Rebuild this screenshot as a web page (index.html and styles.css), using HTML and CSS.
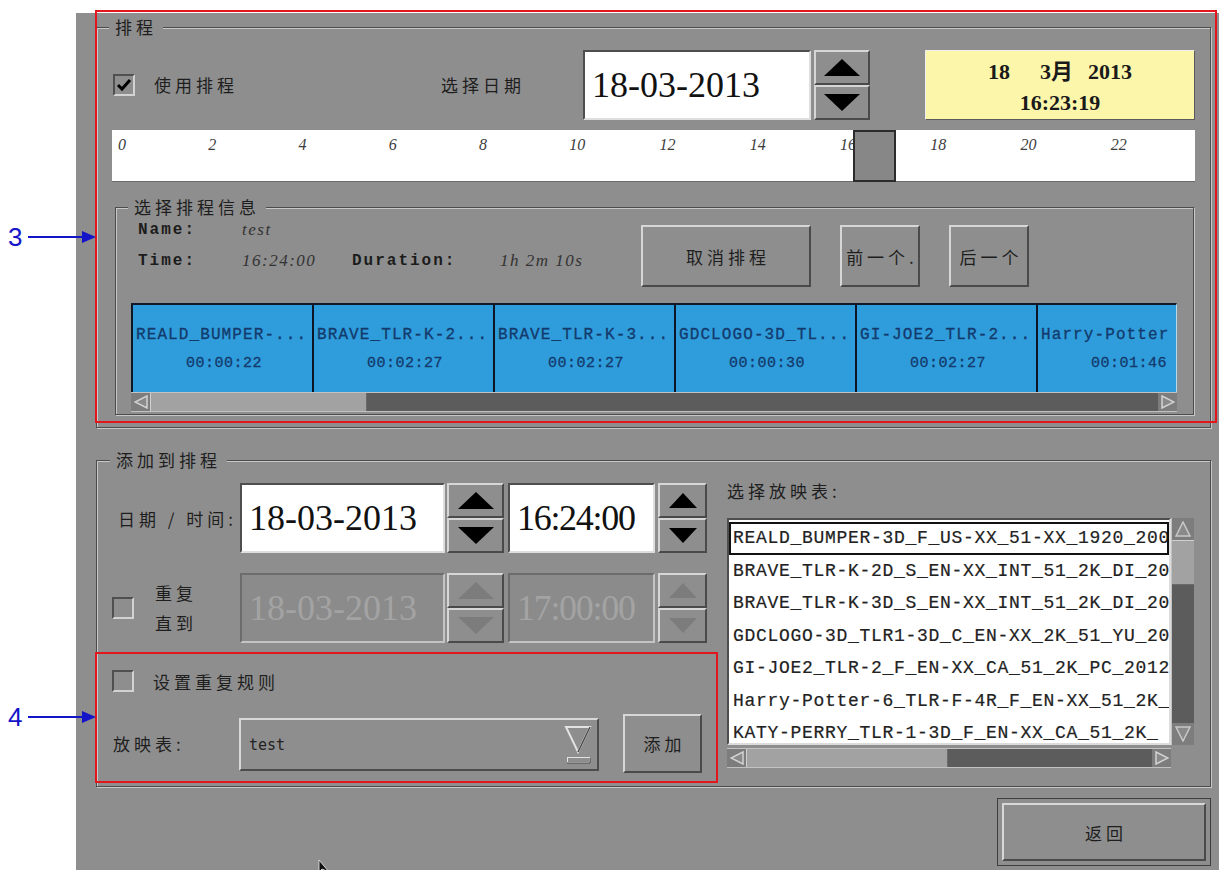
FILE: index.html
```html
<!DOCTYPE html>
<html>

<head>
    <meta charset="utf-8">
    <link rel="stylesheet" href="styles.css">
    <title>排程</title>
</head>

<body>
    <div class="page">
        <div class="screen">
            <!-- schedule overview -->
            <fieldset class="group group-main">
                <legend>排程</legend>
                <div class="top-row">
                    <span class="check"><svg width="16" height="14" viewBox="0 0 16 14"><path d="M2 7 L6 11 L14 2" fill="none" stroke="#000" stroke-width="3"/></svg></span>
                    <span class="label use-label">使用排程</span>
                    <span class="label date-label">选择日期</span>
                    <div class="field top-date">18-03-2013</div>
                    <div class="spin top-spin">
                        <div class="spin-btn"><svg width="36" height="17" viewBox="0 0 36 17"><polygon points="0,17 18,0 36,17" fill="#000"/></svg></div>
                        <div class="spin-btn"><svg width="36" height="17" viewBox="0 0 36 17"><polygon points="0,0 36,0 18,17" fill="#000"/></svg></div>
                    </div>
                    <div class="clock">
                        <div><span>18</span><span class="gap-1">3月</span><span class="gap-2">2013</span></div>
                        <div>16:23:19</div>
                    </div>
                </div>
                <div class="timeline">
                    <span class="hour">0</span><span class="hour">2</span><span class="hour">4</span>
                    <span class="hour">6</span><span class="hour">8</span><span class="hour">10</span>
                    <span class="hour">12</span><span class="hour">14</span><span class="hour">16</span>
                    <span class="hour">18</span><span class="hour">20</span><span class="hour">22</span>
                    <div class="slider"></div>
                </div>

                <fieldset class="group group-info">
                    <legend>选择排程信息</legend>
                    <div class="info-head">
                        <div class="info">
                            <div class="info-row"><span class="key">Name:</span><span class="val">test</span></div>
                            <div class="info-row"><span class="key">Time:</span><span class="val">16:24:00</span><span class="key">Duration:</span><span class="val">1h 2m 10s</span></div>
                        </div>
                        <button class="btn btn-cancel">取消排程</button>
                        <button class="btn btn-small btn-prev">前一个.</button>
                        <button class="btn btn-small btn-next">后一个</button>
                    </div>
                    <div class="strip">
                        <div class="tiles">
                            <div class="tile"><div class="tile-name">REALD_BUMPER-...</div><div class="tile-time">00:00:22</div></div>
                            <div class="tile"><div class="tile-name">BRAVE_TLR-K-2...</div><div class="tile-time">00:02:27</div></div>
                            <div class="tile"><div class="tile-name">BRAVE_TLR-K-3...</div><div class="tile-time">00:02:27</div></div>
                            <div class="tile"><div class="tile-name">GDCLOGO-3D_TL...</div><div class="tile-time">00:00:30</div></div>
                            <div class="tile"><div class="tile-name">GI-JOE2_TLR-2...</div><div class="tile-time">00:02:27</div></div>
                            <div class="tile"><div class="tile-name">Harry-Potter</div><div class="tile-time">00:01:46</div></div>
                        </div>
                        <div class="hscroll">
                            <div class="sb-arrow"><svg width="14" height="14" viewBox="0 0 14 14"><polygon points="13,1 1,7 13,13" fill="#8a8a8a" stroke="#d2d2d2" stroke-width="1.5"/></svg></div>
                            <div class="sb-thumb strip-thumb"></div>
                            <div class="sb-track"></div>
                            <div class="sb-arrow"><svg width="14" height="14" viewBox="0 0 14 14"><polygon points="1,1 13,7 1,13" fill="#8a8a8a" stroke="#d2d2d2" stroke-width="1.5"/></svg></div>
                        </div>
                    </div>
                </fieldset>
            </fieldset>

            <!-- add to schedule -->
            <fieldset class="group group-add">
                <legend>添加到排程</legend>
                <div class="add-body">
                    <div class="add-left">
                        <div class="row row-when">
                            <span class="label when-label">日期 / 时间:</span>
                            <div class="field date-field">18-03-2013</div>
                            <div class="spin date-spin">
                                <div class="spin-btn"><svg width="36" height="17" viewBox="0 0 36 17"><polygon points="0,17 18,0 36,17" fill="#000"/></svg></div>
                                <div class="spin-btn"><svg width="36" height="17" viewBox="0 0 36 17"><polygon points="0,0 36,0 18,17" fill="#000"/></svg></div>
                            </div>
                            <div class="field time-field">16:24:00</div>
                            <div class="spin time-spin">
                                <div class="spin-btn"><svg width="28" height="15" viewBox="0 0 28 15"><polygon points="0,15 14,0 28,15" fill="#000"/></svg></div>
                                <div class="spin-btn"><svg width="28" height="15" viewBox="0 0 28 15"><polygon points="0,0 28,0 14,15" fill="#000"/></svg></div>
                            </div>
                        </div>
                        <div class="row row-repeat">
                            <span class="check"></span>
                            <span class="label repeat-label">重复<br>直到</span>
                            <div class="field date-field disabled">18-03-2013</div>
                            <div class="spin date-spin disabled">
                                <div class="spin-btn"><svg width="36" height="17" viewBox="0 0 36 17"><polygon points="0,17 18,0 36,17" fill="#7c7c7c"/></svg></div>
                                <div class="spin-btn"><svg width="36" height="17" viewBox="0 0 36 17"><polygon points="0,0 36,0 18,17" fill="#7c7c7c"/></svg></div>
                            </div>
                            <div class="field time-field disabled">17:00:00</div>
                            <div class="spin time-spin disabled">
                                <div class="spin-btn"><svg width="28" height="15" viewBox="0 0 28 15"><polygon points="0,15 14,0 28,15" fill="#7c7c7c"/></svg></div>
                                <div class="spin-btn"><svg width="28" height="15" viewBox="0 0 28 15"><polygon points="0,0 28,0 14,15" fill="#7c7c7c"/></svg></div>
                            </div>
                        </div>
                        <div class="row row-rule">
                            <span class="check"></span>
                            <span class="label rule-label">设置重复规则</span>
                        </div>
                        <div class="row row-playlist">
                            <span class="label playlist-label">放映表:</span>
                            <div class="combo">
                                <span>test</span>
                                <svg class="combo-arrow" width="28" height="40" viewBox="0 0 28 40">
                                    <polygon points="2,2 26,2 14,27" fill="none" stroke="#e2e2e2" stroke-width="2"/>
                                    <path d="M26 2 L14 27" stroke="#4a4a4a" stroke-width="1.5"/>
                                    <rect x="3.5" y="32.5" width="22" height="5" fill="#8e8e8e" stroke="#e2e2e2"/>
                                    <path d="M3 38 H26 V33" fill="none" stroke="#4a4a4a"/>
                                </svg>
                            </div>
                            <button class="btn btn-add">添加</button>
                        </div>
                    </div>

                    <div class="add-right">
                        <div class="label list-title">选择放映表:</div>
                        <div class="listbox">
                            <div class="list">
                                <div class="item current">REALD_BUMPER-3D_F_US-XX_51-XX_1920_200</div>
                                <div class="item">BRAVE_TLR-K-2D_S_EN-XX_INT_51_2K_DI_20</div>
                                <div class="item">BRAVE_TLR-K-3D_S_EN-XX_INT_51_2K_DI_20</div>
                                <div class="item">GDCLOGO-3D_TLR1-3D_C_EN-XX_2K_51_YU_20</div>
                                <div class="item">GI-JOE2_TLR-2_F_EN-XX_CA_51_2K_PC_2012</div>
                                <div class="item">Harry-Potter-6_TLR-F-4R_F_EN-XX_51_2K_</div>
                                <div class="item">KATY-PERRY_TLR-1-3D_F_EN-XX_CA_51_2K_</div>
                            </div>
                            <div class="vscroll">
                                <div class="vsb-arrow"><svg width="16" height="16" viewBox="0 0 16 16"><polygon points="1,15 8,1 15,15" fill="#8a8a8a" stroke="#c8c8c8" stroke-width="1.5"/></svg></div>
                                <div class="vsb-thumb"></div>
                                <div class="sb-track"></div>
                                <div class="vsb-arrow"><svg width="16" height="16" viewBox="0 0 16 16"><polygon points="1,1 15,1 8,15" fill="#8a8a8a" stroke="#c8c8c8" stroke-width="1.5"/></svg></div>
                            </div>
                        </div>
                        <div class="hscroll list-hscroll">
                            <div class="sb-arrow"><svg width="14" height="14" viewBox="0 0 14 14"><polygon points="13,1 1,7 13,13" fill="#8a8a8a" stroke="#d2d2d2" stroke-width="1.5"/></svg></div>
                            <div class="sb-thumb list-thumb"></div>
                            <div class="sb-track"></div>
                            <div class="sb-arrow"><svg width="14" height="14" viewBox="0 0 14 14"><polygon points="1,1 13,7 1,13" fill="#8a8a8a" stroke="#d2d2d2" stroke-width="1.5"/></svg></div>
                        </div>
                    </div>
                </div>
            </fieldset>

            <div class="footer">
                <button class="back"><span class="back-face">返回</span></button>
            </div>
        </div>

        <!-- annotations drawn over the screenshot -->
        <div class="mark mark-3"></div>
        <div class="mark mark-4"></div>
        <div class="note note-3"><span>3</span><svg width="68" height="14" viewBox="0 0 68 14"><path d="M0 7 H56" stroke="#1414c8" stroke-width="2"/><polygon points="54,1 68,7 54,13" fill="#1414c8"/></svg></div>
        <div class="note note-4"><span>4</span><svg width="68" height="14" viewBox="0 0 68 14"><path d="M0 7 H56" stroke="#1414c8" stroke-width="2"/><polygon points="54,1 68,7 54,13" fill="#1414c8"/></svg></div>
        <svg class="cursor" width="14" height="12" viewBox="0 0 14 12"><polygon points="1,0 1,12 4,9 11,12" fill="#111" stroke="#eee" stroke-width="0.8"/></svg>
    </div>
</body>

</html>
```

FILE: styles.css
```css
body {
    margin: 0;
    background-color: white;
    font-family: "Noto Sans CJK SC", sans-serif;
    color: #1e1e1e;
}

.page {
    position: relative;
    width: 1219px;
    height: 870px;
    padding-top: 13px;
    box-sizing: border-box;
    overflow: hidden;
}

.screen {
    margin-left: 76px;
    height: 857px;
    padding: 3px 8px 0 20px;
    box-sizing: border-box;
    background-color: #8e8e8e;
}

/* group boxes */
.group {
    margin: 0;
    padding: 0 15px;
    min-width: 0;
    border: 1px solid #4c4c4c;
    box-shadow: inset 1px 1px 0 #c8c8c8, 1px 1px 0 #c8c8c8;
}

.group legend {
    margin-left: -3px;
    padding: 0 6px;
    font-size: 17px;
    line-height: 22px;
    letter-spacing: 4px;
    background-color: #8e8e8e;
}

.label {
    font-size: 17px;
    letter-spacing: 4px;
    white-space: nowrap;
    flex: none;
}

.check {
    width: 22px;
    height: 22px;
    box-sizing: border-box;
    border: 2px solid;
    border-color: #505050 #d2d2d2 #d2d2d2 #505050;
    display: flex;
    align-items: center;
    justify-content: center;
    flex: none;
}

.field {
    box-sizing: border-box;
    height: 70px;
    background-color: white;
    border: 2px solid;
    border-color: #4e4e4e #dedede #dedede #4e4e4e;
    display: flex;
    align-items: center;
    padding-left: 7px;
    font-family: "Liberation Serif", serif;
    font-size: 36px;
    color: #111;
    flex: none;
}

.field.disabled {
    background-color: #8b8b8b;
    color: #a3a3a3;
    border-color: #6c6c6c #c4c4c4 #c4c4c4 #6c6c6c;
}

.spin {
    display: flex;
    flex-direction: column;
    height: 70px;
    flex: none;
}

.spin-btn {
    flex: 1;
    display: flex;
    align-items: center;
    justify-content: center;
    border: 2px solid;
    border-color: #d6d6d6 #4a4a4a #4a4a4a #d6d6d6;
}

.btn {
    box-sizing: border-box;
    padding: 0 0 0 4px;
    border: 2px solid;
    border-color: #d6d6d6 #4a4a4a #4a4a4a #d6d6d6;
    background-color: #8e8e8e;
    font-family: "Noto Sans CJK SC", sans-serif;
    font-size: 17px;
    letter-spacing: 4px;
    color: #1e1e1e;
    flex: none;
}

/* top row */
.top-row {
    margin-top: 11px;
    height: 71px;
    display: flex;
    align-items: center;
}

.top-row .check {
    margin-left: 1px;
}

.use-label {
    margin-left: 19px;
    width: 287px;
}

.date-label {
    width: 142px;
}

.top-date {
    width: 228px;
}

.top-spin {
    margin-left: 3px;
    width: 56px;
}

.clock {
    margin-left: auto;
    width: 270px;
    height: 70px;
    box-sizing: border-box;
    padding-top: 5px;
    background-color: #fcf6ab;
    border: 1px solid;
    border-color: #eeeeee #5a5a5a #5a5a5a #eeeeee;
    font-family: "Liberation Serif", "Noto Sans CJK SC", serif;
    font-weight: bold;
    font-size: 22px;
    line-height: 31px;
    text-align: center;
    color: #1a1a1a;
}

.gap-1 {
    margin-left: 30px;
}

.gap-2 {
    margin-left: 15px;
}

/* timeline */
.timeline {
    position: relative;
    margin-top: 10px;
    height: 52px;
    box-sizing: border-box;
    background-color: white;
    border-bottom: 1px solid #6a6a6a;
    display: grid;
    grid-template-columns: repeat(12, 1fr);
}

.hour {
    padding: 5px 0 0 6px;
    font-family: "Liberation Serif", serif;
    font-style: italic;
    font-size: 16px;
    line-height: 20px;
    color: #3c3c3c;
}

.slider {
    position: absolute;
    left: 741px;
    top: 0;
    width: 43px;
    height: 52px;
    box-sizing: border-box;
    background-color: #878787;
    border: 2px solid #2c2c2c;
}

/* schedule info */
.group-info {
    margin: 14px 1px 12px 3px;
    padding: 0 16px 2px 12px;
}

.group-info legend {
    margin-left: 0;
}

.info-head {
    display: flex;
}

.info {
    margin-left: 10px;
    width: 503px;
    flex: none;
}

.info-row {
    height: 24px;
    display: grid;
    grid-template-columns: 104px 110px 148px auto;
    align-items: center;
}

.info-row + .info-row {
    margin-top: 7px;
}

.key {
    font-family: "Liberation Mono", monospace;
    font-weight: bold;
    font-size: 16px;
    letter-spacing: 2px;
    color: #1c1c1c;
}

.val {
    font-family: "Liberation Serif", serif;
    font-style: italic;
    font-size: 17px;
    letter-spacing: 1.5px;
    color: #333;
}

.info-head .btn {
    margin-top: 7px;
    height: 62px;
}

.btn-cancel {
    width: 170px;
}

.btn-small {
    width: 80px;
}

.btn-prev {
    margin-left: 29px;
}

.btn-next {
    margin-left: 29px;
}

.strip {
    margin: 16px 0 0 3px;
}

.tiles {
    height: 89px;
    box-sizing: border-box;
    display: flex;
    overflow: hidden;
    border-top: 2px solid #111a2a;
    border-right: 1px solid #b8d8ee;
}

.tile {
    flex: 0 0 181px;
    box-sizing: border-box;
    padding: 20px 0 0 3px;
    background-color: #2f9ddc;
    border-left: 2px solid #0e1626;
    color: #133a6c;
    white-space: nowrap;
}

.tile-name {
    font-family: "Liberation Mono", monospace;
    font-size: 16px;
    letter-spacing: 1.1px;
    line-height: 20px;
    -webkit-text-stroke: 0.3px #133a6c;
}

.tile-time {
    margin-top: 9px;
    font-family: "Liberation Mono", monospace;
    font-size: 15px;
    letter-spacing: 0.5px;
    line-height: 20px;
    text-align: center;
    -webkit-text-stroke: 0.3px #133a6c;
}

/* scrollbars */
.hscroll {
    height: 20px;
    display: flex;
    background-color: #5c5c5c;
    border-top: 1px solid #c2c2c2;
    border-bottom: 1px solid #c2c2c2;
    box-sizing: border-box;
}

.sb-arrow {
    width: 19px;
    display: flex;
    align-items: center;
    justify-content: center;
    background-color: #7d7d7d;
    flex: none;
}

.sb-thumb {
    background-color: #a2a2a2;
    border-left: 1px solid #d0d0d0;
    border-right: 1px solid #6a6a6a;
    flex: none;
}

.strip-thumb {
    width: 215px;
}

.list-thumb {
    width: 200px;
}

.sb-track {
    flex: 1;
}

/* add to schedule */
.group-add {
    margin-top: 21px;
    padding-bottom: 13px;
}

.group-add legend {
    margin-left: -2px;
}

.add-body {
    display: flex;
}

.add-left {
    width: 595px;
    flex: none;
}

.row {
    display: flex;
    align-items: center;
}

.row-when {
    margin-top: 12px;
    height: 70px;
}

.when-label {
    margin-left: 6px;
    width: 122px;
}

.date-field {
    width: 205px;
}

.date-spin {
    margin-left: 2px;
    width: 57px;
}

.time-field {
    margin-left: 4px;
    width: 147px;
    letter-spacing: -1.3px;
}

.time-spin {
    margin-left: 3px;
    width: 49px;
}

.row-repeat {
    margin-top: 20px;
    height: 70px;
}

.repeat-label {
    margin-left: 21px;
    width: 85px;
    line-height: 30px;
}

.row-rule {
    margin-top: 27px;
    height: 22px;
}

.rule-label {
    margin-left: 19px;
}

.row-playlist {
    margin-top: 22px;
    height: 59px;
}

.playlist-label {
    margin-left: 1px;
    width: 126px;
}

.combo {
    width: 360px;
    height: 53px;
    margin-top: 2px;
    box-sizing: border-box;
    padding-left: 8px;
    border: 2px solid;
    border-color: #d8d8d8 #4c4c4c #4c4c4c #d8d8d8;
    display: flex;
    align-items: center;
    font-family: "DejaVu Sans Mono", monospace;
    font-size: 15px;
    color: #222;
    flex: none;
}

.combo-arrow {
    margin-left: auto;
    margin-right: 5px;
}

.btn-add {
    margin-left: 24px;
    width: 79px;
    height: 59px;
}

.add-right {
    margin-left: 20px;
    flex: 1;
}

.list-title {
    margin-top: 9px;
    line-height: 22px;
}

.listbox {
    margin-top: 16px;
    height: 227px;
    display: flex;
}

.list {
    width: 444px;
    box-sizing: border-box;
    padding-top: 2px;
    background-color: white;
    border: 2px solid;
    border-color: #4e4e4e #dcdcdc #dcdcdc #4e4e4e;
    overflow: hidden;
    flex: none;
}

.item {
    height: 32.5px;
    box-sizing: border-box;
    padding-left: 4px;
    font-family: "Liberation Mono", monospace;
    font-size: 18px;
    letter-spacing: 0.7px;
    line-height: 32.5px;
    white-space: nowrap;
    overflow: hidden;
    color: #222;
    -webkit-text-stroke: 0.2px #222;
}

.item.current {
    border: 2px solid #111;
    padding-left: 2px;
    line-height: 28.5px;
}

.vscroll {
    width: 22px;
    display: flex;
    flex-direction: column;
    background-color: #5c5c5c;
    border-left: 1px solid #c2c2c2;
    flex: none;
}

.vsb-arrow {
    height: 22px;
    display: flex;
    align-items: center;
    justify-content: center;
    background-color: #7d7d7d;
}

.vsb-thumb {
    height: 43px;
    background-color: #a2a2a2;
    border-top: 1px solid #d0d0d0;
    border-bottom: 1px solid #6a6a6a;
}

.list-hscroll {
    margin-top: 3px;
    width: 444px;
}

/* footer */
.footer {
    margin-top: 11px;
    display: flex;
    justify-content: flex-end;
}

.back {
    width: 214px;
    height: 68px;
    padding: 4px;
    box-sizing: border-box;
    border: 1px solid #3e3e3e;
    background-color: #8e8e8e;
    font-family: "Noto Sans CJK SC", sans-serif;
    font-size: 17px;
    letter-spacing: 4px;
    color: #1e1e1e;
}

.back-face {
    height: 100%;
    box-sizing: border-box;
    padding-left: 4px;
    border: 2px solid;
    border-color: #d8d8d8 #4a4a4a #4a4a4a #d8d8d8;
    display: flex;
    align-items: center;
    justify-content: center;
}

/* annotations */
.mark {
    position: absolute;
    box-sizing: border-box;
    border: 2px solid #e3161e;
}

.mark-3 {
    left: 95px;
    top: 10px;
    width: 1122px;
    height: 413px;
}

.mark-4 {
    left: 95px;
    top: 652px;
    width: 623px;
    height: 131px;
}

.note {
    position: absolute;
    left: 8px;
    display: flex;
    align-items: center;
    gap: 6px;
    font-family: "Liberation Sans", sans-serif;
    font-size: 26px;
    line-height: 30px;
    color: #1414c8;
}

.note-3 {
    top: 222px;
}

.note-4 {
    top: 702px;
}

.cursor {
    position: absolute;
    left: 318px;
    top: 860px;
}
```
